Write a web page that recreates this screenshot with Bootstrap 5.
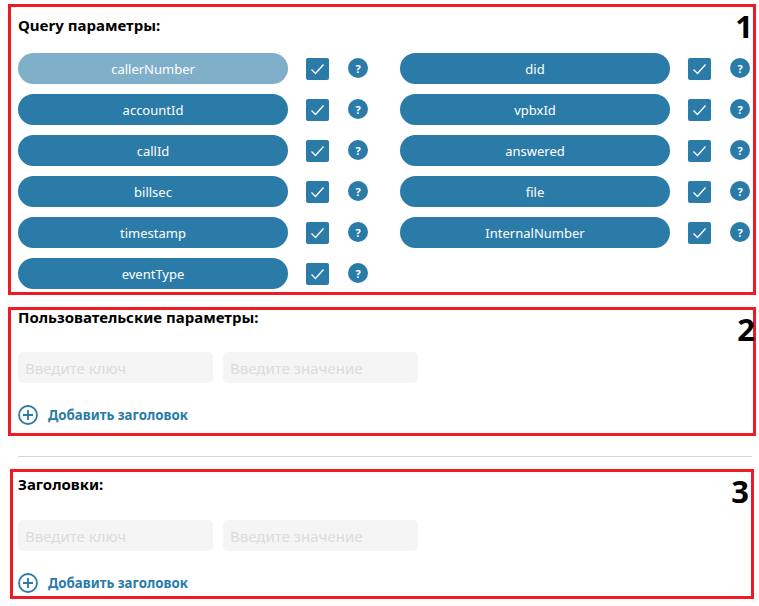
<!DOCTYPE html>
<html lang="ru">
<head>
    <meta charset="UTF-8">
    <meta name="viewport" content="width=device-width, initial-scale=1">
    <title>Параметры запроса</title>
    <link href="https://cdn.jsdelivr.net/npm/bootstrap@5.3.0/dist/css/bootstrap.min.css" rel="stylesheet">
    <style>
        body { font-family: "Noto Sans", "Open Sans", sans-serif; background: #fff; color: #000; }
        .page-wrap { padding-top: 4px; width: 759px; }
        .zone { position: relative; border: 3px solid #ed1c24; margin-left: 8px; width: 748px; padding-left: 7px; }
        .zone-query { height: 291px; }
        .zone-user { height: 129px; margin-top: 12px; }
        .zone-head { height: 130px; margin-left: 10px; width: 744px; padding-left: 5px; }
        .zone-num { position: absolute; right: 0; top: 1px; font: 700 31px/36px "Open Sans", sans-serif; color: #000; }
        .zone-head .zone-num { right: 2px; }
        .zone-user .zone-num { right: -2px; }
        .zone-title { font-size: 15px; font-weight: 700; line-height: 20px; margin: 0; }
        .zone-query .zone-title { padding-top: 9px; margin-top: -1px; }
        .zone-user .zone-title { margin-top: -3px; }
        .zone-head .zone-title { padding-top: 2px; }
        .param-grid { display: grid; grid-template-columns: 350px 350px; column-gap: 32px; row-gap: 10px; margin-top: 18px; }
        .param-pill { width: 270px; height: 31px; padding: 1px 0 0; border: 0; border-radius: 15.5px; background: #2b7ba9; color: #fff; font-size: 13px; line-height: 30px; }
        .param-pill:hover { background: #2b7ba9; color: #fff; }
        .param-pill-light { background: #80afca; }
        .param-check { width: 23px; height: 22px; margin-left: 18px; border-radius: 2px; background: #2b7ba9; }
        .param-help { width: 20px; height: 20px; margin-left: 19px; margin-top: -1px; border-radius: 50%; background: #2b7ba9; color: #fff; font-size: 11px; font-weight: 700; line-height: 1; }
        .kv-row { margin-top: 25px; gap: 10px; }
        .zone-head .kv-row { margin-top: 26px; }
        .kv-input { width: 195px; height: 31px; padding: 0 7px; border: 0; border-radius: 5px; background: #f5f5f5; font-size: 15px; }
        .kv-input::placeholder { color: #dcdcdc; opacity: 1; }
        .add-row { margin-top: 22px; color: #2b7ba9; font-size: 13.3px; font-weight: 700; line-height: 20px; }
        .add-row span { margin-left: 10px; }
        .page-rule { width: 734px; height: 1px; margin: 20px 0 12px 18px; background: #d5d5d5; }
    </style>
</head>
<body>
    <div class="page-wrap">
        <section class="zone zone-query">
            <div class="zone-num">1</div>
            <h6 class="zone-title">Query параметры:</h6>
            <div class="param-grid" id="param-grid"></div>
        </section>

        <section class="zone zone-user">
            <div class="zone-num">2</div>
            <h6 class="zone-title">Пользовательские параметры:</h6>
            <div class="d-flex kv-row">
                <input class="kv-input" type="text" placeholder="Введите ключ">
                <input class="kv-input" type="text" placeholder="Введите значение">
            </div>
            <div class="d-flex align-items-center add-row">
                <svg width="20" height="20" viewBox="0 0 20 20" fill="none" stroke="#2b7ba9" stroke-width="1.8"><circle cx="10" cy="10" r="9"/><path d="M10 5v10M5 10h10"/></svg>
                <span>Добавить заголовок</span>
            </div>
        </section>

        <div class="page-rule"></div>

        <section class="zone zone-head">
            <div class="zone-num">3</div>
            <h6 class="zone-title">Заголовки:</h6>
            <div class="d-flex kv-row">
                <input class="kv-input" type="text" placeholder="Введите ключ">
                <input class="kv-input" type="text" placeholder="Введите значение">
            </div>
            <div class="d-flex align-items-center add-row">
                <svg width="20" height="20" viewBox="0 0 20 20" fill="none" stroke="#2b7ba9" stroke-width="1.8"><circle cx="10" cy="10" r="9"/><path d="M10 5v10M5 10h10"/></svg>
                <span>Добавить заголовок</span>
            </div>
        </section>
    </div>

    <script>
        const params = ["callerNumber", "did", "accountId", "vpbxId", "callId", "answered", "billsec", "file", "timestamp", "InternalNumber", "eventType"];
        const grid = document.getElementById("param-grid");
        params.forEach((name, i) => {
            let item = document.createElement("div");
            item.className = "d-flex align-items-center";
            item.innerHTML = `
                <button type="button" class="btn param-pill ${i === 0 ? "param-pill-light" : ""}">${name}</button>
                <div class="param-check d-flex align-items-center justify-content-center">
                    <svg width="15" height="12" viewBox="0 0 15 12" fill="none" stroke="#fff" stroke-width="1.3"><path d="M1.5 6.5 5.5 10.5 13.5 1.5"/></svg>
                </div>
                <div class="param-help d-flex align-items-center justify-content-center">?</div>
            `;
            grid.appendChild(item);
        });
    </script>
    <script src="https://cdn.jsdelivr.net/npm/bootstrap@5.3.0/dist/js/bootstrap.bundle.min.js"></script>
</body>
</html>
